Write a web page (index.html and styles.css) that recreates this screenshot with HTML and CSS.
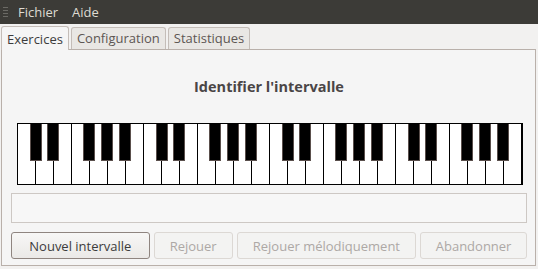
FILE: index.html
```html
<!DOCTYPE html>
<html lang="fr">
<head>
    <meta charset="UTF-8">
    <title>Identifier l'intervalle</title>
    <link rel="stylesheet" href="styles.css">
</head>
<body>
    <div class="menubar">
        <span class="grip"></span>
        <span class="menu">Fichier</span>
        <span class="menu">Aide</span>
    </div>
    <div class="tabs">
        <div class="tab active">Exercices</div>
        <div class="tab">Configuration</div>
        <div class="tab">Statistiques</div>
    </div>
    <div class="page">
        <h1 class="title">Identifier l'intervalle</h1>
        <div class="piano">
            <div class="octave">
                <span class="white"></span><span class="white"></span><span class="white"></span><span class="white"></span><span class="white"></span><span class="white"></span><span class="white"></span>
                <span class="black b1"></span><span class="black b2"></span><span class="black b3"></span><span class="black b4"></span><span class="black b5"></span>
            </div>
            <div class="octave">
                <span class="white"></span><span class="white"></span><span class="white"></span><span class="white"></span><span class="white"></span><span class="white"></span><span class="white"></span>
                <span class="black b1"></span><span class="black b2"></span><span class="black b3"></span><span class="black b4"></span><span class="black b5"></span>
            </div>
            <div class="octave">
                <span class="white"></span><span class="white"></span><span class="white"></span><span class="white"></span><span class="white"></span><span class="white"></span><span class="white"></span>
                <span class="black b1"></span><span class="black b2"></span><span class="black b3"></span><span class="black b4"></span><span class="black b5"></span>
            </div>
            <div class="octave">
                <span class="white"></span><span class="white"></span><span class="white"></span><span class="white"></span><span class="white"></span><span class="white"></span><span class="white"></span>
                <span class="black b1"></span><span class="black b2"></span><span class="black b3"></span><span class="black b4"></span><span class="black b5"></span>
            </div>
        </div>
        <div class="entry"></div>
        <div class="buttons">
            <button class="btn main">Nouvel intervalle</button>
            <button class="btn off b-replay" disabled>Rejouer</button>
            <button class="btn off b-melo" disabled>Rejouer mélodiquement</button>
            <button class="btn off b-give" disabled>Abandonner</button>
        </div>
    </div>
</body>
</html>
```

FILE: styles.css
```css
html, body {
    margin: 0;
    background-color: #f2f1f0;
    font-family: "Open Sans", "DejaVu Sans", sans-serif;
    font-size: 13px;
    color: #3c3c3c;
}
.menubar {
    height: 24px;
    background-color: #3c3b37;
    display: flex;
    align-items: center;
    padding-left: 3px;
}
.grip {
    width: 5px;
    height: 10px;
    margin-right: 10px;
    background: repeating-linear-gradient(#6b6a65 0 1px, transparent 1px 3px);
}
.menu {
    color: #dfdbd2;
    margin-right: 14px;
}
.tabs {
    display: flex;
    gap: 2px;
    padding: 2px 0 0 1px;
    height: 23px;
    align-items: flex-end;
}
.tab {
    height: 21px;
    line-height: 21px;
    padding: 0 5px;
    border: 1px solid #c4bdb8;
    border-bottom: none;
    border-radius: 3px 3px 0 0;
    background-color: #e9e7e4;
    color: #5d5653;
}
.tab.active {
    height: 23px;
    line-height: 24px;
    background-color: #f5f5f5;
    color: #3c3c3c;
    position: relative;
    z-index: 1;
    margin-bottom: -1px;
}
.page {
    margin: 0 2px 0 1px;
    height: 217px;
    border: 1px solid #b9b0aa;
    background-color: #f5f5f5;
    box-sizing: border-box;
    padding: 0 8px 0 9px;
}
.title {
    margin: 0;
    padding-top: 27px;
    height: 45px;
    box-sizing: border-box;
    text-align: center;
    font-size: 14.5px;
    font-weight: bold;
    color: #4a4546;
}
.piano {
    margin: 28px 0 0 6px;
    width: 506px;
    height: 62px;
    box-sizing: border-box;
    border: 1px solid #000;
    display: flex;
    background: #fff;
}
.octave {
    position: relative;
    display: flex;
}
.white {
    width: 18px;
    height: 60px;
    box-sizing: border-box;
    border-right: 1px solid #000;
}
.octave:last-child .white:last-child {
    border-right: none;
}
.black {
    position: absolute;
    top: 0;
    width: 12px;
    height: 37px;
    background-color: #000;
    border: 1px solid #5a4f4c;
    border-top: none;
    box-sizing: border-box;
}
.b1 { left: 12px; }
.b2 { left: 29px; }
.b3 { left: 65px; }
.b4 { left: 83px; }
.b5 { left: 101px; }
.entry {
    margin-top: 8px;
    height: 30px;
    box-sizing: border-box;
    border: 1px solid #cdc8c4;
    background-color: #f7f7f7;
}
.buttons {
    display: flex;
    gap: 4px;
    margin-top: 9px;
}
.btn {
    height: 27px;
    font-family: inherit;
    font-size: 13px;
    border-radius: 3px;
    padding: 0;
    background: linear-gradient(#f7f7f6, #ebe9e7);
}
.main {
    width: 139px;
    border: 1px solid #8f8580;
    color: #3c3c3c;
}
.off {
    border: 1px solid #dcd8d4;
    background: #f3f3f2;
    color: #ada8a5;
}
.b-replay { width: 79px; }
.b-melo { width: 180px; }
.b-give { width: 107px; }
```
